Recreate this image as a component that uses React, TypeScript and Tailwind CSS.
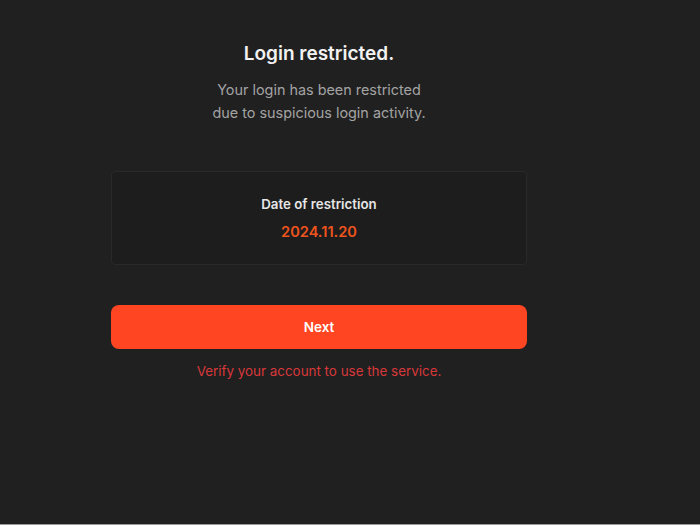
export default function App() {
  return (
    <div className="flex h-[525px] w-full flex-col bg-[#202020] font-['Inter',_'Noto_Sans',_sans-serif]">
      <div className="flex flex-1 pl-[111px]">
        <div className="flex w-[416px] flex-col items-center pt-[40px] text-center">
          <h1 className="text-[19px] leading-[28px] font-semibold text-[#f2f2f2]">
            Login restricted.
          </h1>
          <p className="mt-[10px] text-[14.4px] leading-[23px] text-[#a3a3a3]">
            Your login has been restricted
            <br />
            due to suspicious login activity.
          </p>
          <div className="mt-[47px] flex h-[94px] w-full flex-col items-center justify-center rounded-[4px] border border-[#292929] bg-[#1d1d1d]">
            <span className="text-[13.3px] leading-[20px] font-semibold text-[#e6e6e6]">
              Date of restriction
            </span>
            <span className="mt-[8px] text-[14.6px] leading-[20px] font-semibold text-[#f0541e]">
              2024.11.20
            </span>
          </div>
          <button className="mt-[40px] h-[44px] w-full rounded-[8px] bg-[#ff4522] text-[13.5px] font-semibold text-white">
            Next
          </button>
          <p className="mt-[12px] text-[13.4px] leading-[20px] text-[#d8383a]">
            Verify your account to use the service.
          </p>
        </div>
      </div>
      <div className="h-px bg-[#9a9a9a]" />
    </div>
  );
}
